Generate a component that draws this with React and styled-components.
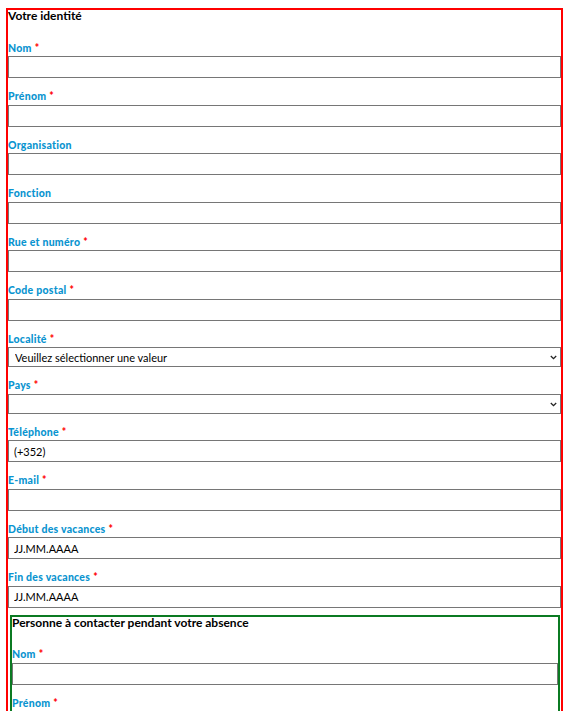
import styled, { createGlobalStyle } from "styled-components";

const GlobalStyle = createGlobalStyle`
  body {
    margin: 0;
    background: #ffffff;
    font-family: Lato, "Open Sans", sans-serif;
    color: #000000;
  }
`;

const identityFields = [
  { label: "Nom", required: true },
  { label: "Prénom", required: true },
  { label: "Organisation" },
  { label: "Fonction" },
  { label: "Rue et numéro", required: true },
  { label: "Code postal", required: true },
  { label: "Localité", required: true, type: "select", placeholder: "Veuillez sélectionner une valeur" },
  { label: "Pays", required: true, type: "select", placeholder: "" },
  { label: "Téléphone", required: true, value: "(+352)" },
  { label: "E-mail", required: true },
  { label: "Début des vacances", required: true, value: "JJ.MM.AAAA" },
  { label: "Fin des vacances", required: true, value: "JJ.MM.AAAA" },
];

const contactFields = [
  { label: "Nom", required: true },
  { label: "Prénom", required: true },
  { label: "Téléphone", required: true, value: "(+352)" },
];

export default function App() {
  return (
    <Page>
      <GlobalStyle />
      <Section $color="#ff0000" $width="557px">
        <Heading>Votre identité</Heading>
        {identityFields.map((f, i) => <Field key={i} field={f} />)}

        <Section $color="#0b7a22" $nested>
          <Heading>Personne à contacter pendant votre absence</Heading>
          {contactFields.map((f, i) => <Field key={i} field={f} />)}
        </Section>
      </Section>
    </Page>
  );
}

const Field = ({ field }) => {
  return (
    <FieldBlock>
      <Label>
        {field.label}
        {field.required && <Star>*</Star>}
      </Label>
      {field.type === "select" ? (
        <SelectWrap>
          <Select defaultValue="">
            <option value="">{field.placeholder}</option>
          </Select>
          <Chevron width="7" height="5" viewBox="0 0 7 5">
            <path d="M0.8 1 L3.5 3.7 L6.2 1" fill="none" stroke="#222" strokeWidth="1.3" />
          </Chevron>
        </SelectWrap>
      ) : (
        <Input type="text" defaultValue={field.value ?? ""} />
      )}
    </FieldBlock>
  );
};

const Page = styled.div`
  padding: 8px 0 0 6px;
`;

const Section = styled.div`
  box-sizing: border-box;
  width: ${({ $width }) => $width ?? "auto"};
  border: 2px solid ${({ $color }) => $color};
  margin: ${({ $nested }) => ($nested ? "7px 1px 0 2px" : "0")};
  padding-bottom: 40px;
`;

const Heading = styled.h3`
  margin: 0 0 7.5px;
  font-size: 12px;
  line-height: 12px;
  font-weight: 700;
`;

const FieldBlock = styled.div`
  display: flex;
  flex-direction: column;
`;

const Label = styled.label`
  display: block;
  margin: 12px 0 2.5px;
  font-size: 10.5px;
  line-height: 12px;
  font-weight: 900;
  letter-spacing: 0.25px;
  color: #0a94d0;
`;

const Star = styled.span`
  color: #ff0000;
  margin-left: 3px;
  font-weight: 900;
`;

const Input = styled.input`
  box-sizing: border-box;
  width: 100%;
  height: 22px;
  margin: 0;
  padding: 0 5px;
  border: 1px solid #767676;
  border-radius: 0;
  font-family: Lato, sans-serif;
  font-size: 11px;
  color: #000000;
  outline: none;
`;

const SelectWrap = styled.div`
  position: relative;
  display: flex;
`;

const Select = styled.select`
  box-sizing: border-box;
  width: 100%;
  height: 20px;
  margin: 0;
  padding: 0 6px;
  border: 1px solid #767676;
  border-radius: 0;
  background: #ffffff;
  appearance: none;
  font-family: Lato, sans-serif;
  font-size: 11px;
  color: #000000;
`;

const Chevron = styled.svg`
  position: absolute;
  right: 4px;
  top: 8px;
  pointer-events: none;
`;
